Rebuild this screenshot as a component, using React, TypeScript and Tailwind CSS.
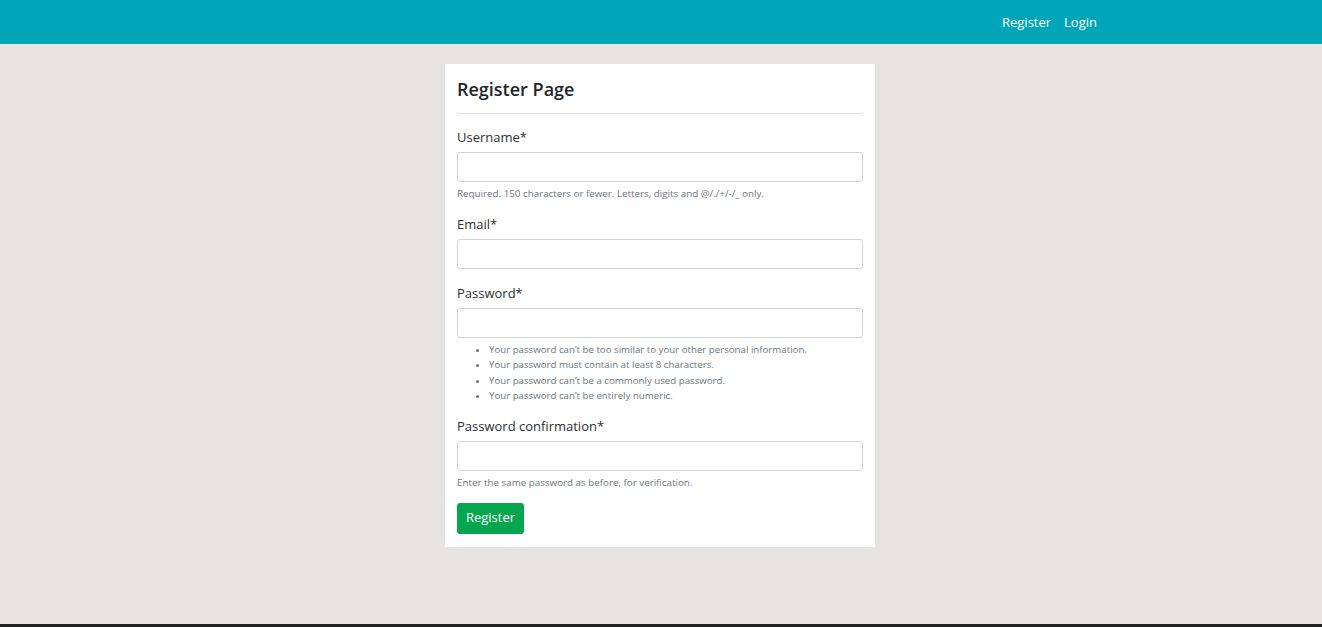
import React from "react";

const font = { fontFamily: '"Open Sans", "Noto Sans", "Liberation Sans", sans-serif' };

function Field({ label, children }: { label: string; children?: React.ReactNode }) {
  return (
    <div className="flex flex-col">
      <label className="text-[13px] leading-[20px] text-[#2b2f33]">{label}</label>
      <input className="mt-[5px] h-[30px] w-full rounded-[3px] border border-[#cfd3d7] bg-white" />
      {children}
    </div>
  );
}

export default function App() {
  return (
    <div className="min-h-[627px] w-full bg-[#e6e3e1] flex flex-col" style={font}>
      <nav className="h-[44px] w-full bg-[#00a5b9] flex items-center justify-end pr-[225px] pt-[2px]">
        <a className="text-[13px] text-white mr-[13px]">Register</a>
        <a className="text-[13px] text-white">Login</a>
      </nav>
      <div className="flex justify-center pt-[20px] pr-[2px] flex-1">
        <div className="w-[430px] self-start bg-white px-[12px] pt-[12px] pb-[13px]">
          <h4 className="text-[18px] leading-[26px] font-semibold text-[#212529]">Register Page</h4>
          <div className="mt-[11px] h-px w-full bg-[#e3e3e3]" />
          <div className="mt-[13px]">
            <Field label="Username*">
              <p className="mt-[5px] text-[9.8px] leading-[14px] text-[#6c757d]">
                Required. 150 characters or fewer. Letters, digits and @/./+/-/_ only.
              </p>
            </Field>
          </div>
          <div className="mt-[13px]">
            <Field label="Email*" />
          </div>
          <div className="mt-[14px]">
            <Field label="Password*">
              <ul className="mt-[4px] list-disc pl-[32px] text-[9.7px] leading-[15.4px] text-[#6c757d]">
                <li>Your password can’t be too similar to your other personal information.</li>
                <li>Your password must contain at least 8 characters.</li>
                <li>Your password can’t be a commonly used password.</li>
                <li>Your password can’t be entirely numeric.</li>
              </ul>
            </Field>
          </div>
          <div className="mt-[12px]">
            <Field label="Password confirmation*">
              <p className="mt-[5px] text-[9.8px] leading-[14px] text-[#6c757d]">
                Enter the same password as before, for verification.
              </p>
            </Field>
          </div>
          <button className="mt-[13px] h-[31px] w-[67px] rounded-[3px] bg-[#05a64e] text-[13px] text-white">
            Register
          </button>
        </div>
      </div>
      <div className="h-[3px] w-full bg-[#222]" />
    </div>
  );
}
